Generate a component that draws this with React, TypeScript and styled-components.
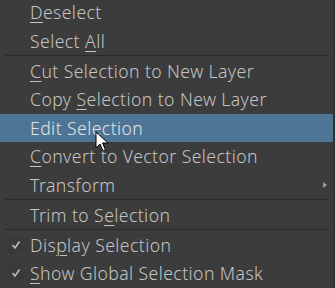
import React from 'react';
import styled, { createGlobalStyle } from 'styled-components';

const Global = createGlobalStyle`
  html, body {
    margin: 0;
    padding: 0;
    background: #3c3c3c;
    overflow: hidden;
  }
`;

const Menu = styled.div`
  position: relative;
  width: 335px;
  height: 288px;
  box-sizing: border-box;
  background: #3c3c3c;
  border-right: 2px solid #323232;
  overflow: hidden;
`;

const List = styled.div`
  display: flex;
  flex-direction: column;
  margin-top: -2px;
`;

const Item = styled.div<{ $active?: boolean }>`
  display: flex;
  align-items: center;
  height: 28.5px;
  padding-left: 30px;
  padding-right: 8px;
  background: ${(p) => (p.$active ? '#4f7596' : 'transparent')};
  color: ${(p) => (p.$active ? '#e2e2e2' : '#c4c4c4')};
  font-family: 'Noto Sans', 'Open Sans', sans-serif;
  font-size: 17.6px;
  font-weight: 300;
  letter-spacing: 0.42px;
  white-space: nowrap;
  position: relative;
`;

const Label = styled.span`
  flex: 1;
`;

const Mn = styled.span`
  text-decoration: underline;
  text-underline-offset: 3px;
  text-decoration-thickness: 1px;
`;

const Separator = styled.div`
  height: 1.5px;
  display: flex;
  align-items: center;
  padding: 0 4px 0 5px;
  &::after {
    content: '';
    flex: 1;
    height: 1px;
    background: #2a2a2a;
  }
`;

const CheckBox = styled.span`
  position: absolute;
  left: 8px;
  top: 50%;
  transform: translateY(-50%);
  width: 15px;
  height: 17px;
  background: #393939;
  display: flex;
  align-items: center;
  justify-content: center;
`;

const Arrow = styled.span`
  width: 0;
  height: 0;
  border-top: 3.5px solid transparent;
  border-bottom: 3.5px solid transparent;
  border-left: 4px solid #9a9a9a;
  margin-right: -2px;
`;

const Cursor = styled.svg`
  position: absolute;
  left: 95px;
  top: 131px;
`;

function Check() {
  return (
    <CheckBox>
      <svg width="10" height="9" viewBox="0 0 10 9">
        <path d="M1.5 4.5 L4 7.5 L8.5 1" fill="none" stroke="#bdbdbd" strokeWidth="1.6" />
      </svg>
    </CheckBox>
  );
}

export default function App() {
  return (
    <Menu>
      <Global />
      <List>
        <Item><Label><Mn>D</Mn>eselect</Label></Item>
        <Item><Label>Select <Mn>A</Mn>ll</Label></Item>
        <Separator />
        <Item><Label><Mn>C</Mn>ut Selection to New Layer</Label></Item>
        <Item><Label>Copy <Mn>S</Mn>election to New Layer</Label></Item>
        <Item $active><Label>Edit Selection</Label></Item>
        <Item><Label><Mn>C</Mn>onvert to Vector Selection</Label></Item>
        <Item><Label>Transform</Label><Arrow /></Item>
        <Separator />
        <Item><Label>Trim to S<Mn>e</Mn>lection</Label></Item>
        <Separator />
        <Item><Check /><Label>Dis<Mn>p</Mn>lay Selection</Label></Item>
        <Item><Check /><Label><Mn>S</Mn>how Global Selection Mask</Label></Item>
      </List>
      <Cursor width="16" height="22" viewBox="0 0 16 22">
        <path d="M1 1 L1 17 L5 13 L8 20 L10.5 19 L7.5 12 L13 12 Z" fill="#ffffff" stroke="#000000" strokeWidth="1" strokeLinejoin="round" />
      </Cursor>
    </Menu>
  );
}
